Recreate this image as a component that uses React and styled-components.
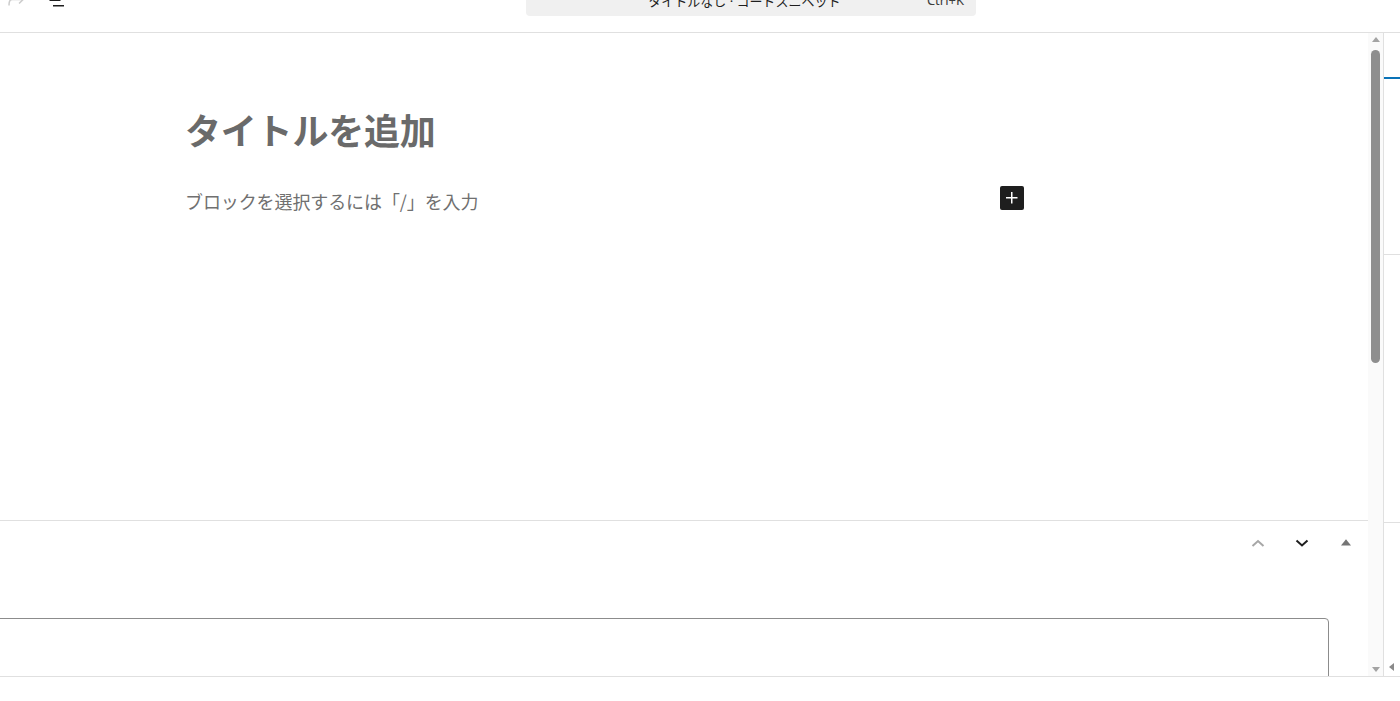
import styled, { createGlobalStyle } from 'styled-components';

const GlobalStyle = createGlobalStyle`
  html, body {
    margin: 0;
    padding: 0;
    overflow: hidden;
    background: #fff;
  }
  body {
    font-family: "Noto Sans", "Noto Sans CJK JP", sans-serif;
    color: #1e1e1e;
  }
`;

const Skeleton = styled.div`
  width: 1400px;
  height: 701px;
  display: flex;
  flex-direction: column;
  overflow: hidden;
`;

const Header = styled.header`
  flex: none;
  height: 64px;
  margin-top: -32px;
  border-bottom: 1px solid #e0e0e0;
  display: flex;
  align-items: center;
`;

const HeaderLeft = styled.div`
  width: 526px;
  display: flex;
  align-items: center;
  gap: 15px;
  padding-left: 4px;
  box-sizing: border-box;
`;

const IconButton = styled.span`
  width: 24px;
  height: 24px;
  display: flex;
  color: ${(p) => (p.$disabled ? '#cccccc' : '#1e1e1e')};
`;

const CommandBar = styled.div`
  width: 450px;
  height: 32px;
  border-radius: 4px;
  background: #f0f0f0;
  display: flex;
  align-items: center;
  padding: 0 12px 0 0;
  box-sizing: border-box;
  font-size: 13px;
`;

const CommandTitle = styled.span`
  flex: 1;
  text-align: center;
  padding-left: 36px;
  color: #1e1e1e;
`;

const Shortcut = styled.span`
  color: #3c3c3c;
`;

const Body = styled.div`
  flex: 1;
  display: flex;
  min-height: 0;
`;

const ContentArea = styled.div`
  flex: 1;
  display: flex;
  min-width: 0;
`;

const MainColumn = styled.div`
  flex: 1;
  display: flex;
  flex-direction: column;
  min-width: 0;
`;

const Canvas = styled.div`
  flex: none;
  height: 487px;
  padding: 71px 0 0 185px;
  box-sizing: border-box;
`;

const Column = styled.div`
  width: 839px;
`;

const Title = styled.h1`
  margin: 0;
  font-family: "Noto Sans CJK JP", sans-serif;
  font-size: 36px;
  line-height: 50px;
  font-weight: 600;
  letter-spacing: -0.2px;
  color: #6a6a6a;
`;

const ParagraphRow = styled.div`
  margin-top: 31px;
  height: 32px;
  display: flex;
  align-items: center;
  justify-content: space-between;
`;

const Placeholder = styled.p`
  margin: 0;
  font-family: "Noto Sans CJK JP", sans-serif;
  font-size: 18px;
  line-height: 32px;
  letter-spacing: -0.1px;
  color: #707070;
`;

const Appender = styled.button`
  width: 24px;
  height: 24px;
  margin-top: -7px;
  border: none;
  border-radius: 2px;
  background: #1e1e1e;
  color: #fff;
  padding: 0;
  display: flex;
  align-items: center;
  justify-content: center;
`;

const MetaBoxes = styled.div`
  flex: 1;
  border-top: 1px solid #e0e0e0;
  display: flex;
  flex-direction: column;
  overflow: hidden;
  padding-right: 39px;
`;

const MetaHeader = styled.div`
  flex: none;
  height: 44px;
  display: flex;
  justify-content: flex-end;
  margin-right: -39px;
`;

const MetaButton = styled.span`
  width: 44px;
  display: flex;
  align-items: center;
  justify-content: center;
  color: ${(p) => p.$color};
`;

const MetaBox = styled.div`
  margin: 53px 0 0 -10px;
  height: 120px;
  flex: none;
  border: 1px solid #8c8c8c;
  border-radius: 4px;
`;

const Scrollbar = styled.div`
  width: 15px;
  flex: none;
  background: #fafafa;
  display: flex;
  flex-direction: column;
  align-items: center;
`;

const ScrollArrow = styled.span`
  height: 14px;
  display: flex;
  align-items: center;
  justify-content: center;
  color: #a3a3a3;
`;

const Thumb = styled.div`
  width: 9px;
  height: 313px;
  margin-top: 3px;
  border-radius: 5px;
  background: #8e8e8e;
`;

const ScrollSpacer = styled.div`
  flex: 1;
`;

const Sidebar = styled.aside`
  width: 16px;
  flex: none;
  border-left: 1px solid #e0e0e0;
  display: flex;
  flex-direction: column;
`;

const SidebarTabs = styled.div`
  height: 47px;
  flex: none;
  display: flex;
  align-items: flex-end;
`;

const ActiveTab = styled.div`
  width: 100%;
  height: 2px;
  margin-bottom: 1px;
  background: #0a73b8;
`;

const SidebarPanel = styled.div`
  height: ${(p) => p.$h}px;
  flex: none;
  border-bottom: 1px solid #e0e0e0;
`;

const SidebarBottom = styled.div`
  flex: 1;
  display: flex;
  align-items: flex-end;
  padding: 0 0 5px 4px;
  color: #8a8a8a;
`;

const Footer = styled.footer`
  flex: none;
  height: 24px;
  border-top: 1px solid #e0e0e0;
`;

const RedoIcon = () => (
  <svg width="24" height="24" viewBox="0 0 24 24" fill="currentColor">
    <path d="M15.6 6.5l-1.1 1 2.9 3.3H8c-.9 0-1.7.3-2.3.9-1.4 1.5-1.4 4.2-1.4 5.6v.2h1.5v-.3c0-1.1 0-3.5 1-4.5.3-.3.7-.5 1.3-.5h9.2L14.5 15l1.1 1.1 4.6-4.6-4.6-5z" />
  </svg>
);

const ListIcon = () => (
  <svg width="24" height="24" viewBox="0 0 24 24" fill="currentColor">
    <path d="M3 6h11v1.5H3V6Zm3.5 5.5h11V13h-11v-1.5ZM10 17h11v1.5H10V17Z" />
  </svg>
);

const Chevron = ({ up }) => (
  <svg width="24" height="24" viewBox="0 0 24 24" fill="none" stroke="currentColor" strokeWidth="2">
    <path d={up ? 'M6.5 15l5.5-5 5.5 5' : 'M6.5 9.5l5.5 5 5.5-5'} />
  </svg>
);

const Tri = ({ dir, size = 8 }) => {
  const d = {
    up: 'M0 6 L4 1 L8 6 Z',
    down: 'M0 2 L4 7 L8 2 Z',
    left: 'M6 0 L1 4 L6 8 Z',
  }[dir];
  return (
    <svg width={size} height={size} viewBox="0 0 8 8" fill="currentColor">
      <path d={d} />
    </svg>
  );
};

export default function App() {
  return (
    <>
      <GlobalStyle />
      <Skeleton>
        <Header>
          <HeaderLeft>
            <IconButton $disabled>
              <RedoIcon />
            </IconButton>
            <IconButton>
              <ListIcon />
            </IconButton>
          </HeaderLeft>
          <CommandBar>
            <CommandTitle>タイトルなし · コードスニペット</CommandTitle>
            <Shortcut>Ctrl+K</Shortcut>
          </CommandBar>
        </Header>
        <Body>
          <ContentArea>
            <MainColumn>
              <Canvas>
                <Column>
                  <Title>タイトルを追加</Title>
                  <ParagraphRow>
                    <Placeholder>ブロックを選択するには「/」を入力</Placeholder>
                    <Appender aria-label="ブロックを追加">
                      <svg width="24" height="24" viewBox="0 0 24 24" fill="currentColor">
                        <path d="M11 12.5V17.5H12.5V12.5H17.5V11H12.5V6H11V11H6V12.5H11Z" />
                      </svg>
                    </Appender>
                  </ParagraphRow>
                </Column>
              </Canvas>
              <MetaBoxes>
                <MetaHeader>
                  <MetaButton $color="#a7a7a7">
                    <Chevron up />
                  </MetaButton>
                  <MetaButton $color="#1e1e1e">
                    <Chevron />
                  </MetaButton>
                  <MetaButton $color="#757575">
                    <Tri dir="up" size={10} />
                  </MetaButton>
                </MetaHeader>
                <MetaBox />
              </MetaBoxes>
            </MainColumn>
            <Scrollbar>
              <ScrollArrow>
                <Tri dir="up" />
              </ScrollArrow>
              <Thumb />
              <ScrollSpacer />
              <ScrollArrow>
                <Tri dir="down" />
              </ScrollArrow>
            </Scrollbar>
          </ContentArea>
          <Sidebar>
            <SidebarTabs>
              <ActiveTab />
            </SidebarTabs>
            <SidebarPanel $h={174} />
            <SidebarPanel $h={267} />
            <SidebarBottom>
              <Tri dir="left" />
            </SidebarBottom>
          </Sidebar>
        </Body>
        <Footer />
      </Skeleton>
    </>
  );
}
